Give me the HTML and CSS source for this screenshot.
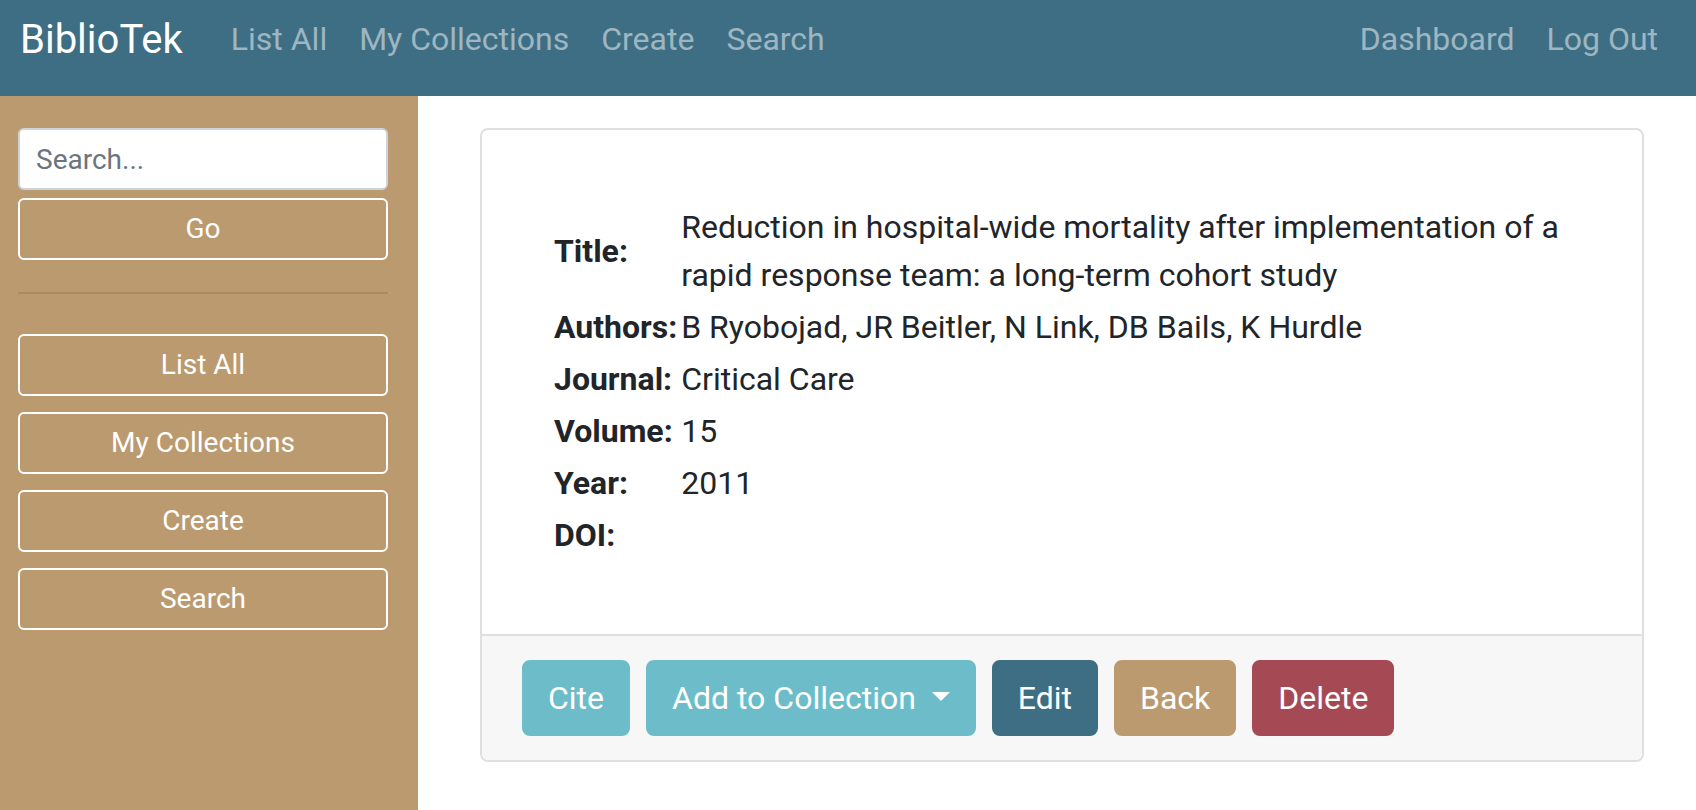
FILE: index.html
```html
<!DOCTYPE html>
<html lang="en">
<head>
<meta charset="utf-8">
<title>BiblioTek</title>
<link rel="stylesheet" href="styles.css">
</head>
<body>
<nav class="navbar">
  <a class="brand" href="#">BiblioTek</a>
  <ul class="nav nav-left">
    <li><a class="nav-link" href="#">List All</a></li>
    <li><a class="nav-link" href="#">My Collections</a></li>
    <li><a class="nav-link" href="#">Create</a></li>
    <li><a class="nav-link" href="#">Search</a></li>
  </ul>
  <ul class="nav nav-right">
    <li><a class="nav-link" href="#">Dashboard</a></li>
    <li><a class="nav-link" href="#">Log Out</a></li>
  </ul>
</nav>
<div class="layout">
  <aside class="sidebar">
    <form class="search-form">
      <input class="search-input" type="text" placeholder="Search...">
      <button class="side-btn" type="button">Go</button>
    </form>
    <hr class="side-rule">
    <div class="side-links">
      <a class="side-btn" href="#">List All</a>
      <a class="side-btn" href="#">My Collections</a>
      <a class="side-btn" href="#">Create</a>
      <a class="side-btn" href="#">Search</a>
    </div>
  </aside>
  <main class="main">
    <div class="card">
      <div class="card-body">
        <table class="details">
          <tr><th>Title:</th><td>Reduction in hospital-wide mortality after implementation of a rapid response team: a long-term cohort study</td></tr>
          <tr><th>Authors:</th><td>B Ryobojad, JR Beitler, N Link, DB Bails, K Hurdle</td></tr>
          <tr><th>Journal:</th><td>Critical Care</td></tr>
          <tr><th>Volume:</th><td>15</td></tr>
          <tr><th>Year:</th><td>2011</td></tr>
          <tr><th>DOI:</th><td></td></tr>
        </table>
      </div>
      <div class="card-footer">
        <button class="btn btn-info" type="button">Cite</button>
        <button class="btn btn-info" type="button">Add to Collection<span class="caret"></span></button>
        <button class="btn btn-primary" type="button">Edit</button>
        <button class="btn btn-tan" type="button">Back</button>
        <button class="btn btn-danger" type="button">Delete</button>
      </div>
    </div>
  </main>
</div>
</body>
</html>
```
FILE: styles.css
```css
* { box-sizing: border-box; }

html, body {
  margin: 0;
  padding: 0;
}

body {
  font-family: Roboto, "Liberation Sans", sans-serif;
  font-size: 32px;
  line-height: 1.5;
  color: #212529;
  background: #ffffff;
}

a { text-decoration: none; }

/* Navbar */
.navbar {
  display: flex;
  align-items: center;
  height: 96px;
  padding: 0 22px 18px 20px;
  background: #3d6e83;
}

.brand {
  font-size: 40px;
  line-height: 60px;
  color: #ffffff;
  margin-right: 32px;
  padding-top: 2px;
}

.nav {
  display: flex;
  list-style: none;
  margin: 0;
  padding: 0;
}

.nav-right { margin-left: auto; }

.nav-link {
  display: block;
  padding: 0 16px;
  line-height: 48px;
  color: rgba(255, 255, 255, 0.5);
}

/* Layout */
.layout {
  display: flex;
  min-height: calc(100vh - 96px);
}

.sidebar {
  flex: none;
  width: 418px;
  background: #bb9a70;
  padding: 32px 30px 0 18px;
}

.search-form {
  display: flex;
  flex-direction: column;
  gap: 8px;
}

.search-input {
  height: 62px;
  padding: 8px 16px;
  font-family: inherit;
  font-size: 28px;
  line-height: 42px;
  color: #495057;
  background: #ffffff;
  border: 2px solid #ced4da;
  border-radius: 6px;
  outline: none;
}

.search-input::placeholder { color: #6c757d; }

.side-btn {
  display: block;
  width: 100%;
  height: 62px;
  padding: 8px 16px;
  font-family: inherit;
  font-size: 28px;
  line-height: 42px;
  text-align: center;
  color: #ffffff;
  background: transparent;
  border: 2px solid #ffffff;
  border-radius: 6px;
}

.side-rule {
  margin: 32px 0 40px;
  border: 0;
  border-top: 2px solid rgba(0, 0, 0, 0.1);
}

.side-links {
  display: flex;
  flex-direction: column;
  gap: 16px;
}

/* Main */
.main {
  flex: 1;
  padding: 32px 52px 32px 62px;
}

.card {
  border: 2px solid #dfdfdf;
  border-radius: 8px;
  background: #ffffff;
  overflow: hidden;
}

.card-body {
  padding: 40px;
}

.details {
  border-collapse: collapse;
  margin: 31px 32px 33px;
}

.details th,
.details td {
  padding: 2px 0;
  vertical-align: middle;
  text-align: left;
  line-height: 48px;
}

.details th {
  font-weight: 700;
  padding-right: 4px;
  white-space: nowrap;
}

.card-footer {
  display: flex;
  gap: 16px;
  padding: 24px 40px;
  background: #f7f7f7;
  border-top: 2px solid #dfdfdf;
}

.btn {
  font-family: inherit;
  font-size: 32px;
  line-height: 48px;
  padding: 12px 24px;
  border: 2px solid transparent;
  border-radius: 8px;
  color: #ffffff;
  cursor: pointer;
}

.btn-info { background: #6cbdc9; border-color: #6cbdc9; }
.btn-primary { background: #3d6e83; border-color: #3d6e83; }
.btn-tan { background: #bb9a70; border-color: #bb9a70; }
.btn-danger { background: #a54a54; border-color: #a54a54; }

.caret {
  display: inline-block;
  margin-left: 16px;
  vertical-align: 8px;
  border-top: 9px solid #ffffff;
  border-left: 9px solid transparent;
  border-right: 9px solid transparent;
}
```
